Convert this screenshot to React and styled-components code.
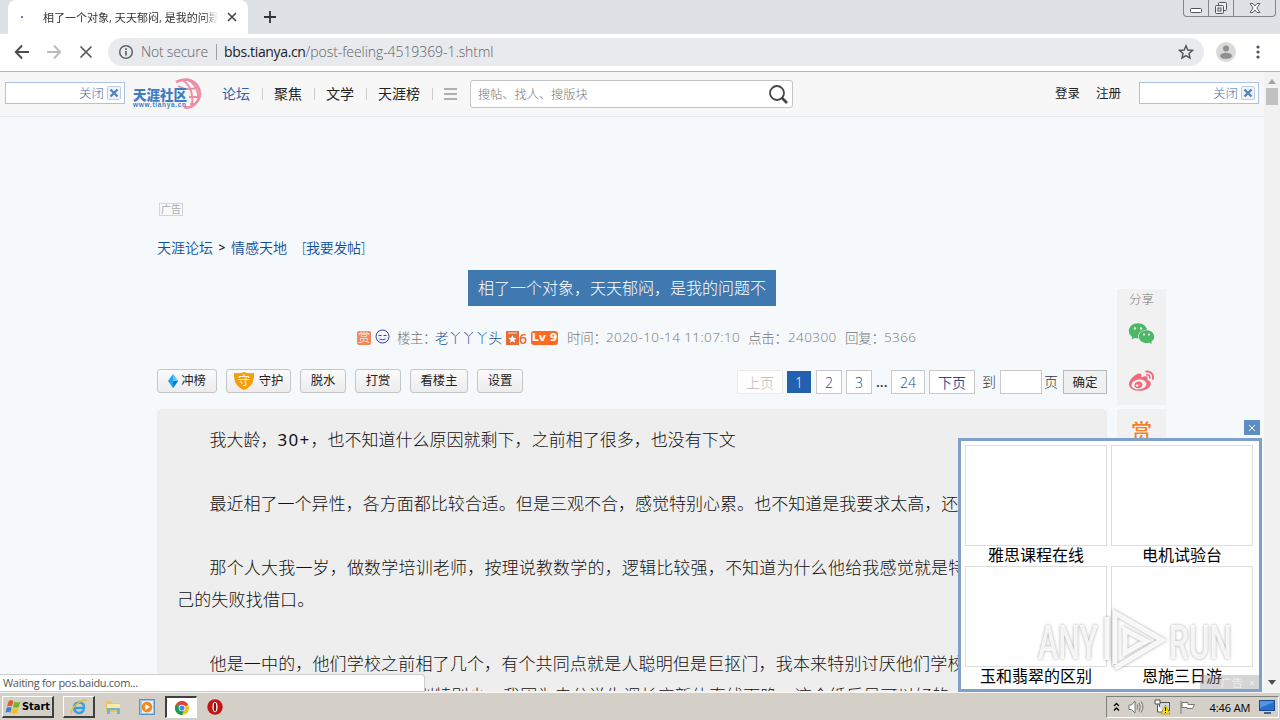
import React from "react";
import styled, { createGlobalStyle } from "styled-components";
import { FaWeibo } from "react-icons/fa";
import { AiFillWechat } from "react-icons/ai";

const GlobalStyle = createGlobalStyle`
  * { box-sizing: border-box; }
  body {
    margin: 0;
    overflow: hidden;
    font-family: "Open Sans", "Noto Sans CJK SC", sans-serif;
  }
`

const Screen = styled.div`
  position: relative;
  width: 1280px;
  height: 720px;
  display: flex;
  flex-direction: column;
  overflow: hidden;
  white-space: nowrap;
`

/* browser */
const TabStrip = styled.div`
  height: 34px;
  flex: none;
  display: flex;
  align-items: flex-start;
  background: #dee1e6;
  padding-left: 8px;
`
const Tab = styled.div`
  width: 240px;
  height: 34px;
  display: flex;
  align-items: center;
  background: #fff;
  border-radius: 8px 8px 0 0;
  padding: 0 10px 0 13px;
  i{
    width: 2px;
    height: 2px;
    background: #5b7fc7;
    margin-right: 20px;
  }
  span{
    width: 175px;
    overflow: hidden;
    font-size: 11px;
    letter-spacing: 0.02px;
    color: #333;
    -webkit-mask-image: linear-gradient(90deg, #000 92%, transparent);
    mask-image: linear-gradient(90deg, #000 92%, transparent);
  }
  svg{
    margin-left: 9px;
    flex: none;
  }
`
const NewTab = styled.div`
  height: 34px;
  display: flex;
  align-items: center;
  margin-left: 15px;
`
const WindowButtons = styled.div`
  margin-left: auto;
  margin-right: 4px;
  width: 93px;
  height: 17px;
  display: flex;
  border: 1px solid #82868f;
  border-top: none;
  border-radius: 0 0 4px 4px;
  span{
    width: 25px;
    display: flex;
    align-items: center;
    justify-content: center;
    border-right: 1px solid #82868f;
  }
  span:last-child{
    flex: 1;
    border: none;
  }
`
const Toolbar = styled.div`
  height: 38px;
  flex: none;
  display: flex;
  align-items: center;
  background: #fff;
  border-bottom: 1px solid #b4b5b7;
  padding: 0 13px 2px 14px;
`
const NavIcon = styled.svg`
  width: 16px;
  height: 16px;
  margin-right: 16px;
`
const Omnibox = styled.div`
  width: 1096px;
  height: 28px;
  display: flex;
  align-items: center;
  background: #e8eaed;
  border-radius: 14px;
  padding: 0 10px;
  margin-left: -2px;
  font-size: 14px;
  font-weight: 300;
  color: #5f6368;
  .secure{
    width: 75px;
    margin-left: 7px;
    letter-spacing: -0.2px;
  }
  .url{
    flex: 1;
    border-left: 1px solid #9aa0a6;
    line-height: 16px;
    padding-left: 7px;
    letter-spacing: -0.07px;
  }
  b{
    font-weight: 400;
    letter-spacing: -0.35px;
    color: #222;
  }
`

/* page */
const Viewport = styled.div`
  height: 619px;
  flex: none;
  display: flex;
  overflow: hidden;
`
const Page = styled.div`
  position: relative;
  width: 1264px;
  background: #f5f9fb;
  overflow: hidden;
`
const ScrollBar = styled.div`
  width: 16px;
  display: flex;
  flex-direction: column;
  align-items: center;
  background: #f1f1f1;
  padding: 7px 0 6px;
  i{
    width: 12px;
    height: 17px;
    background: #c1c1c1;
    margin: 4px 0 auto;
  }
`
const Header = styled.div`
  height: 45px;
  display: flex;
  align-items: center;
  background: #f7f7f7;
  border-bottom: 1px solid #e2eaed;
  padding: 0 5px;
`
const CloseAd = styled.div`
  width: 120px;
  height: 22px;
  display: flex;
  align-items: center;
  justify-content: flex-end;
  background: #fff;
  border: 1px solid #a9c3e6;
  padding-right: 3px;
  margin-bottom: 3px;
  font-size: 12.5px;
  font-weight: 300;
  color: #3d6eb0;
  svg{
    margin-left: 3px;
  }
`
const Logo = styled.svg`
  width: 70px;
  height: 32px;
  margin: 0 20px 0 7px;
`
const Menu = styled.div`
  display: flex;
  align-items: center;
  height: 20px;
  a{
    font-size: 14px;
    line-height: 20px;
    color: #222;
  }
  a:first-child{
    color: #2a62ad;
  }
  i{
    width: 1px;
    height: 12px;
    background: #ccc;
    margin: 0 11.5px;
  }
`
const Search = styled.div`
  width: 323px;
  height: 28px;
  display: flex;
  align-items: center;
  justify-content: space-between;
  background: #fff;
  border: 1px solid #c4c4c4;
  border-radius: 3px;
  padding: 0 3px 0 7px;
  margin-left: 13px;
  font-size: 12.2px;
  font-weight: 300;
  color: #777;
`
const Login = styled.div`
  width: 66px;
  display: flex;
  justify-content: space-between;
  margin: 0 18px 3px auto;
  font-size: 12.5px;
  color: #222;
`
const Content = styled.div`
  width: 950px;
  margin: 86px 0 0 157px;
  display: flex;
  flex-direction: column;
`
const AdTag = styled.div`
  width: 24px;
  height: 13px;
  border: 1px solid #d2d5d7;
  margin-left: 2px;
  font-size: 10px;
  line-height: 11px;
  text-align: center;
  color: #a9abad;
`
const Crumbs = styled.div`
  height: 20px;
  display: flex;
  align-items: center;
  margin-top: 21px;
  font-size: 14px;
  font-weight: 350;
  color: #0f4f9b;
  b{
    width: 18px;
    text-align: center;
    font-weight: 600;
    font-size: 12px;
    color: #111;
  }
  span{
    margin-left: 15px;
    letter-spacing: -0.35px;
  }
`
const Title = styled.div`
  width: 308px;
  height: 36px;
  margin: 13px 0 0 311px;
  padding-left: 10px;
  background: #4078b0;
  font-size: 16px;
  line-height: 36px;
  font-weight: 300;
  color: #fff;
`
const Meta = styled.div`
  height: 18px;
  display: flex;
  align-items: center;
  margin: 22px 0 0 200px;
  font-size: 13.5px;
  font-weight: 300;
  color: #777;
`
const MetaItem = styled.span`
  width: ${props => props.$w}px;
  flex: none;
  margin-top: -1px;
  letter-spacing: ${props => props.$ls || 0}px;
  color: ${props => props.$link ? "#0f4f9b" : "inherit"};
`
const Reward = styled.span`
  width: 14px;
  height: 14px;
  margin: 1px 4px 0 0;
  background: #f1875a;
  border-radius: 2px;
  color: #fff;
  font-size: 12px;
  line-height: 14px;
  text-align: center;
`
const StarBadge = styled.span`
  width: 21px;
  height: 16px;
  display: flex;
  align-items: center;
  margin: 2px 4px 0 0;
  color: #e96a35;
  font-size: 14px;
  font-weight: 600;
`
const Level = styled.span`
  width: 27px;
  height: 14px;
  margin: 1px 9px 0 0;
  border-radius: 3px;
  background: #ff6a1e;
  color: #fff;
  font-family: "DejaVu Sans", sans-serif;
  font-size: 11px;
  font-weight: bold;
  line-height: 14px;
  text-align: center;
`
const Actions = styled.div`
  height: 26px;
  display: flex;
  align-items: flex-start;
  margin-top: 23px;
`
const Button = styled.button`
  width: ${props => props.$w}px;
  height: 24px;
  display: flex;
  align-items: center;
  justify-content: center;
  gap: ${props => props.$gap || 0}px;
  margin-right: 9px;
  padding: 0;
  background: linear-gradient(#fafafa, #ececec);
  border: 1px solid #c3c5c6;
  border-radius: 3px;
  font-family: inherit;
  font-size: 12.3px;
  line-height: 22px;
  color: #222;
`
const Pager = styled.div`
  display: flex;
  align-items: center;
  margin: 1px 0 0 auto;
  font-size: 14px;
  font-weight: 300;
  color: #333;
`
const PageBox = styled.span`
  width: ${props => props.$w}px;
  height: ${props => props.$current ? 22 : 24}px;
  margin-left: ${props => props.$ml || 4}px;
  background: ${props => props.$current ? "#2360b0" : "#fff"};
  border: ${props => props.$current ? "none" : "1px solid " + (props.$off ? "#ececec" : "#c9c9c9")};
  color: ${props => props.$current ? "#fff" : props.$off ? "#bbb" : "#1d4d93"};
  font-weight: ${props => props.$off ? 300 : 350};
  line-height: 23px;
  text-align: center;
`
const Plain = styled.span`
  width: ${props => props.$w}px;
  margin: -2px 0 0 ${props => props.$ml}px;
  font-weight: ${props => props.$bold ? 600 : 300};
`
const Submit = styled.span`
  width: 44px;
  height: 24px;
  margin-left: 5px;
  background: #f0f0f0;
  border: 1px solid #b8b8b8;
  font-size: 12.5px;
  line-height: 23px;
  font-weight: 400;
  text-align: center;
  color: #222;
`
const Article = styled.div`
  width: 950px;
  height: 400px;
  margin-top: 14px;
  padding: 15px 0 0 20px;
  background: #eee;
  border-radius: 5px 5px 0 0;
  overflow: hidden;
  font-size: 17px;
  font-weight: 300;
  line-height: 32px;
  color: #111;
`
const Paragraph = styled.p`
  margin: 0 0 32px;
  text-indent: 32.5px;
  letter-spacing: ${props => props.$ls || 0.02}px;
`
const Num = styled.span`
  font-family: "Noto Sans", sans-serif;
  font-weight: 400;
  letter-spacing: 1.2px;
`
const Share = styled.div`
  position: absolute;
  left: 1117px;
  top: 217px;
  width: 49px;
  display: flex;
  flex-direction: column;
  gap: 4px;
`
const ShareBox = styled.div`
  height: 116px;
  display: flex;
  flex-direction: column;
  align-items: center;
  background: #f1f1f1;
  font-size: 12.5px;
  line-height: 22px;
  font-weight: 300;
  color: #777;
  svg{
    flex: none;
  }
  b{
    margin-top: 11px;
    font-size: 21px;
    font-weight: 500;
    color: #f58220;
  }
`

/* floating advert */
const Popup = styled.div`
  position: absolute;
  left: 958px;
  top: 438px;
  width: 304px;
  height: 254px;
  display: grid;
  grid-template-columns: 142px 142px;
  grid-template-rows: 121px 121px;
  column-gap: 4px;
  background: #fff;
  border: 3px solid #7fa0cb;
  padding: 4px 0 0 4px;
`
const PopupItem = styled.div`
  font-size: 16px;
  line-height: 18px;
  text-align: center;
  color: #000;
  div{
    height: 101px;
    border: 1px solid #ddd;
  }
`
const PopupClose = styled.div`
  position: absolute;
  left: 1244px;
  top: 420px;
  width: 16px;
  height: 15px;
  display: flex;
  align-items: center;
  justify-content: center;
  background: #5b8fc4;
`
const AdMark = styled.div`
  position: absolute;
  left: 1200px;
  top: 675px;
  width: 59px;
  height: 14px;
  display: flex;
  align-items: center;
  justify-content: flex-end;
  gap: 6px;
  padding-right: 4px;
  background: rgba(150, 150, 150, 0.4);
  color: #eee;
  font-size: 11px;
`
const Watermark = styled.svg`
  position: absolute;
  left: 1030px;
  top: 602px;
  width: 212px;
  height: 76px;
  filter: drop-shadow(0 0 1.5px rgba(0, 0, 0, 0.4));
`
const Status = styled.div`
  position: absolute;
  left: 0;
  top: 674px;
  width: 425px;
  height: 18px;
  padding-left: 3px;
  background: #fff;
  border: 1px solid #ccc;
  border-left: none;
  border-radius: 0 4px 0 0;
  font-size: 11px;
  line-height: 16px;
  letter-spacing: -0.3px;
  color: #555;
`

/* taskbar */
const TaskBar = styled.div`
  height: 29px;
  flex: none;
  display: flex;
  align-items: center;
  background: #d4d0c8;
  border-top: 2px solid #f5f4f1;
  padding: 1px 1px 0 2px;
`
const Task = styled.div`
  width: ${props => props.$w || 32}px;
  height: 22px;
  display: flex;
  align-items: center;
  justify-content: center;
  margin-right: ${props => props.$mr || 2}px;
  background: ${props => props.$active ? "#fff" : "transparent"};
  border-style: solid;
  border-width: ${props => props.$flat ? 0 : props.$active ? "2px 1px 1px 2px" : "1px 2px 2px 1px"};
  border-color: ${props => props.$active ? "#404040 #fff #fff #404040" : "#fff #404040 #404040 #fff"};
  font-family: "DejaVu Sans Condensed", "DejaVu Sans", sans-serif;
  font-size: 11px;
  font-weight: bold;
  color: #000;
`
const Tray = styled.div`
  width: 173px;
  height: 22px;
  display: flex;
  align-items: center;
  justify-content: space-between;
  margin-left: auto;
  padding: 0 3px 0 6px;
  border: 1px solid;
  border-color: #808080 #fff #fff #808080;
  font-size: 11px;
  color: #000;
  span{
    width: 41px;
    margin-left: 5px;
    letter-spacing: -0.1px;
  }
`

const pages = [
    {text: "上页", w: 46, off: true},
    {text: "1", w: 24, ml: 4, current: true},
    {text: "2", w: 26, ml: 5},
    {text: "3", w: 26},
]
const adverts = ["雅思课程在线", "电机试验台", "玉和翡翠的区别", "恩施三日游"]

function BoxX() {
    return(
        <svg width="14" height="14" viewBox="0 0 14 14">
            <rect x=".5" y=".5" width="13" height="13" rx="1" fill="#f1f5fa" stroke="#b8cce6"/>
            <path d="M3.500 3.500L10.500 10.500M10.500 3.500L3.500 10.500" stroke="#5580bd" strokeWidth="2.300"/>
        </svg>
    )
}

function Browser() {
    return(
        <>
            <TabStrip>
                <Tab>
                    <i/>
                    <span>相了一个对象, 天天郁闷, 是我的问题不</span>
                    <svg width="10" height="10" viewBox="0 0 10 10"><path d="M1 1L9 9M9 1L1 9" stroke="#444" strokeWidth="1.6"/></svg>
                </Tab>
                <NewTab>
                    <svg width="14" height="14" viewBox="0 0 14 14"><path d="M7 1V13M1 7H13" stroke="#333" strokeWidth="1.8"/></svg>
                </NewTab>
                <WindowButtons>
                    <span><svg width="13" height="17"><rect x=".5" y="8.500" width="11" height="4" rx="1" fill="#fff" stroke="#50545c"/></svg></span>
                    <span>
                        <svg width="14" height="17" fill="#eceef1" stroke="#50545c"><rect x="4.500" y="2.500" width="8" height="8" rx="1"/><rect x="1.500" y="5.500" width="8" height="8" rx="1"/><rect x="4" y="8" width="3" height="3"/></svg>
                    </span>
                    <span>
                        <svg width="12" height="17"><path d="M1 3.500h3l2 2.500 2-2.500h3L7.800 8 11 12.500H8L6 10l-2 2.500H1L4.200 8z" fill="#fff" stroke="#50545c" strokeWidth=".9"/></svg>
                    </span>
                </WindowButtons>
            </TabStrip>
            <Toolbar>
                <NavIcon viewBox="0 0 16 16" fill="none" stroke="#484b4f" strokeWidth="1.9"><path d="M15 8H2M8 1.500L1.800 8L8 14.500"/></NavIcon>
                <NavIcon viewBox="0 0 16 16" fill="none" stroke="#b8babd" strokeWidth="1.900"><path d="M1 8H14M8 1.500L14.200 8L8 14.500"/></NavIcon>
                <NavIcon viewBox="0 0 16 16" fill="none" stroke="#55585c" strokeWidth="1.700"><path d="M2.500 2.500L13.500 13.500M13.500 2.500L2.500 13.500"/></NavIcon>
                <Omnibox>
                    <svg width="16" height="16" viewBox="0 0 16 16"><circle cx="8" cy="8" r="6.300" fill="none" stroke="#5f6368" strokeWidth="1.500"/><path d="M8 7V11.500M8 4.300V5.900" stroke="#5f6368" strokeWidth="1.700"/></svg>
                    <span className="secure">Not secure</span>
                    <span className="url"><b>bbs.tianya.cn</b>/post-feeling-4519369-1.shtml</span>
                    <svg width="16" height="16" viewBox="0 0 16 16"><path d="M8 1.800L9.800 6l4.700.4-3.500 3 1 4.600L8 11.600 4 14l1-4.600-3.500-3L6.200 6z" fill="none" stroke="#505357" strokeWidth="1.400"/></svg>
                </Omnibox>
                <svg width="20" height="20" viewBox="0 0 20 20" style={{marginLeft: 12}}><circle cx="10" cy="10" r="10" fill="#dadada"/><circle cx="10" cy="6.500" r="3" fill="#8f8f8f"/><ellipse cx="10" cy="13.800" rx="6" ry="3" fill="#8f8f8f"/></svg>
                <svg width="4" height="14" viewBox="0 0 4 14" fill="#505357" style={{marginLeft: 20}}><circle cx="2" cy="2" r="1.600"/><circle cx="2" cy="7" r="1.600"/><circle cx="2" cy="12" r="1.600"/></svg>
            </Toolbar>
        </>
    )
}

function TianyaLogo() {
    return(
        <Logo viewBox="0 0 70 32">
            <g fill="none" stroke="#f08ba4" strokeWidth="1.800">
                <path d="M44 4Q57-2 65 7Q72 18 62 27Q57 31 52 29" strokeWidth="2.600"/>
                <path d="M50 2Q62 8 60 28M46 8Q57 14 66 9M57 19H68M55 1Q67 8 66 22M58 26H63"/>
            </g>
            <text x="1" y="22" fontSize="14" fontWeight="900" fill="#3e7cc5" textLength="54" lengthAdjust="spacingAndGlyphs" fontFamily="Noto Sans CJK SC">天涯社区</text>
            <text x="1" y="29" fontSize="6.500" fontWeight="bold" fill="#3e7cc5" textLength="53" fontFamily="Liberation Sans">www.tianya.cn</text>
        </Logo>
    )
}

function TopBar() {
    return(
        <Header>
            <CloseAd>关闭<BoxX/></CloseAd>
            <TianyaLogo/>
            <Menu>
                <a>论坛</a><i/><a>聚焦</a><i/><a>文学</a><i/><a>天涯榜</a><i/>
            </Menu>
            <svg width="13" height="12" viewBox="0 0 13 12"><path d="M0 1H13M0 6H13M0 11H13" stroke="#999" strokeWidth="1.600"/></svg>
            <Search>
                搜帖、找人、搜版块
                <svg width="22" height="22" viewBox="0 0 22 22" fill="none" stroke="#444" strokeWidth="1.800"><circle cx="10" cy="10" r="7"/><path d="M15 15L20 20" strokeWidth="2.600"/></svg>
            </Search>
            <Login><span>登录</span><span>注册</span></Login>
            <CloseAd>关闭<BoxX/></CloseAd>
        </Header>
    )
}

function Post() {
    return(
        <Content>
            <AdTag>广告</AdTag>
            <Crumbs>天涯论坛<b>&gt;</b>情感天地<span>[我要发帖]</span></Crumbs>
            <Title>相了一个对象，天天郁闷，是我的问题不</Title>
            <Meta>
                <Reward>赏</Reward>
                <svg width="15" height="15" viewBox="0 0 15 15" fill="none" stroke="#3c3ca8" style={{marginRight: 7, marginTop: -1}}><circle cx="7.500" cy="7.500" r="6.500"/><path d="M3.500 6.500H6.500M8.500 6.500H11.500M4.500 10Q7.500 11.500 10.500 10"/></svg>
                <MetaItem $w={38} $ls={-0.5}>楼主：</MetaItem>
                <MetaItem $w={71} $ls={-0.1} $link>老丫丫丫头</MetaItem>
                <StarBadge>
                    <svg width="13" height="14" viewBox="0 0 13 14"><path d="M0 0H13V14H0z" fill="#e96a35"/><path d="M2 2H11" stroke="#fff" strokeWidth=".8"/><path d="M6.500 4l1.200 2.700 2.800.2-2.100 1.900.7 2.900-2.600-1.500-2.600 1.500.7-2.900L2.500 6.900l2.800-.2z" fill="#fff"/></svg>
                    6
                </StarBadge>
                <Level>Lv 9</Level>
                <MetaItem $w={39} $ls={-0.3}>时间：</MetaItem>
                <MetaItem $w={142} $ls={0.4}>2020-10-14 11:07:10</MetaItem>
                <MetaItem $w={40} $ls={-0.3}>点击：</MetaItem>
                <MetaItem $w={57} $ls={0.4}>240300</MetaItem>
                <MetaItem $w={39} $ls={-0.3}>回复：</MetaItem>
                <MetaItem $w={40} $ls={0.4}>5366</MetaItem>
            </Meta>
            <Actions>
                <Button $w={60} $gap={3}>
                    <svg width="10" height="14" viewBox="0 0 10 14"><path d="M5 0L10 7L5 14L0 7z" fill="#27a5f2"/><path d="M5 0L10 7H5z" fill="#66cbff"/><path d="M5 14L10 7H5z" fill="#1379cf"/></svg>
                    冲榜
                </Button>
                <Button $w={65} $gap={5}>
                    <svg width="20" height="18" viewBox="0 0 20 18"><path d="M0 1Q6 2 10 0Q14 2 20 1V5Q19 15 10 18Q1 15 0 5z" fill="#f59d0d"/><text x="4" y="13" fontSize="12" fill="#fff">守</text></svg>
                    守护
                </Button>
                <Button $w={46}>脱水</Button>
                <Button $w={46}>打赏</Button>
                <Button $w={58}>看楼主</Button>
                <Button $w={46}>设置</Button>
                <Pager>
                    {
                        pages.map((p, id) => <PageBox key={id} $w={p.w} $ml={p.ml} $off={p.off} $current={p.current}>{p.text}</PageBox>)
                    }
                    <Plain $w={11} $ml={4} $bold>...</Plain>
                    <PageBox $w={34}>24</PageBox>
                    <PageBox $w={46}>下页</PageBox>
                    <Plain $w={15} $ml={7}>到</Plain>
                    <PageBox $w={42} $ml={3}/>
                    <Plain $w={14} $ml={2}>页</Plain>
                    <Submit>确定</Submit>
                </Pager>
            </Actions>
            <Article>
                <Paragraph>我大龄，<Num>30+</Num>，也不知道什么原因就剩下，之前相了很多，也没有下文</Paragraph>
                <Paragraph>最近相了一个异性，各方面都比较合适。但是三观不合，感觉特别心累。也不知道是我要求太高，还</Paragraph>
                <Paragraph $ls={0.18}>那个人大我一岁，做数学培训老师，按理说教数学的，逻辑比较强，不知道为什么他给我感觉就是特<br/>己的失败找借口。</Paragraph>
                <Paragraph $ls={0.16}>他是一中的，他们学校之前相了几个，有个共同点就是人聪明但是巨抠门，我本来特别讨厌他们学校<br/>的人因为之前相过的几个都这样别特别少，我因为去分说生调长应新体直线下晚，这个纸后是可以好的</Paragraph>
            </Article>
        </Content>
    )
}

function Taskbar() {
    return(
        <TaskBar>
            <Task $w={52} $mr={9}>
                <svg width="17" height="16" viewBox="0 0 15 15"><path d="M3 2q2-1.500 4.500 0L6 7Q4 5.800 1.500 7z" fill="#e8562a"/><path d="M8.300 2.500Q11 4 14 2.500L12.500 7.500Q10 9 7 7.500z" fill="#72b52c"/><path d="M1.200 8Q3.500 6.800 5.800 8L4.500 13Q2.500 11.500 0 13z" fill="#3c80d6"/><path d="M6.700 8.500q2.500 1.500 5.500 0L11 13q-3 1.500-5.500 0z" fill="#f6bd20"/></svg>
                Start
            </Task>
            <Task>
                <svg width="18" height="18" viewBox="0 0 18 18" fill="none"><path d="M14 11.500Q12 15.500 8.500 15Q4 14 4 9.500Q4.500 4.500 9.500 4.500Q14.500 5 14 10H5" stroke="#3aa0e0" strokeWidth="2.500"/><path d="M2 16Q-1 13 7 6Q15 0 16.500 3" stroke="#e9be3a" strokeWidth="1.500"/></svg>
            </Task>
            <Task $flat>
                <svg width="16" height="16" viewBox="0 0 16 16"><path d="M1 2H6L7 4H14V13H1z" fill="#e6c75e"/><path d="M2 5H15V9H2z" fill="#f8eba9"/><path d="M2 9H15V15H12V11H5V15H2z" fill="#6db5de"/></svg>
            </Task>
            <Task $flat>
                <svg width="16" height="16" viewBox="0 0 16 16"><rect x=".5" y=".5" width="15" height="15" fill="#9cc5ea" stroke="#5b91c5"/><rect x="3" y="2" width="11" height="12" fill="#e4eff9"/><circle cx="8" cy="8" r="5.300" fill="#f18a1b"/><path d="M6.300 5L11 8L6.300 11z" fill="#fff"/></svg>
            </Task>
            <Task $active>
                <svg width="14" height="14" viewBox="0 0 16 16"><circle cx="8" cy="8" r="8" fill="#f4c20d"/><path d="M8 8L1 4A8 8 0 0 1 15 4z" fill="#db4437"/><path d="M1 4A8 8 0 0 0 8 16L10.500 10z" fill="#0f9d58"/><circle cx="8" cy="8" r="3.800" fill="#fff"/><circle cx="8" cy="8" r="2.900" fill="#4285f4"/></svg>
            </Task>
            <Task $flat>
                <svg width="16" height="16" viewBox="0 0 16 16"><circle cx="8" cy="8" r="7.700" fill="#c11414"/><ellipse cx="8" cy="8" rx="2.600" ry="5.300" fill="#fff"/><ellipse cx="8" cy="8" rx="1.200" ry="4.500" fill="#8d0b0b"/></svg>
            </Task>
            <Tray>
                <svg width="7" height="10" viewBox="0 0 7 10" fill="none" stroke="#000" strokeWidth="1.300"><path d="M1 4L3.500 1.500L6 4M1 8.500L3.500 6L6 8.500"/></svg>
                <svg width="17" height="14" viewBox="0 0 17 14" fill="none" stroke="#777"><path d="M1 5H3.500L7 1V13L3.500 9.500H1z" fill="#fff"/><path d="M9 4.500Q10.500 7 9 9.500M11 3Q13.500 7 11 11.500M13 1.500Q17 7 13 12.500"/></svg>
                <svg width="17" height="16" viewBox="0 0 17 16"><rect x="5.500" y="3.500" width="10" height="8" fill="#cfd8dd" stroke="#555"/><path d="M1 1H6V5H1zM3.500 5V13H9" fill="#fff" stroke="#555"/><path d="M11.500 6L16 15H7z" fill="#ffdf25" stroke="#9b8200" strokeWidth=".6"/><path d="M11.500 8.500V12M11.500 13V14" stroke="#000"/></svg>
                <svg width="17" height="15" viewBox="0 0 17 15" fill="#fff" stroke="#777"><path d="M2 1V14"/><path d="M3 2.500H9V4.500H15.500L13.500 8.500H8V7.500H3z"/></svg>
                <span>4:46 AM</span>
                <svg width="16" height="14" viewBox="0 0 16 14"><rect x=".5" y=".5" width="15" height="10" fill="#2870cf" stroke="#174a91"/><path d="M1 8L15 2V1H1z" fill="#5295e5"/><path d="M5 13H12" stroke="#465f80" strokeWidth="2"/></svg>
            </Tray>
        </TaskBar>
    )
}

function App() {
    return(
        <Screen>
            <GlobalStyle/>
            <Browser/>
            <Viewport>
                <Page>
                    <TopBar/>
                    <Post/>
                    <Share>
                        <ShareBox>
                            分享
                            <AiFillWechat size={29} color="#4cb866" style={{marginTop: 8}}/>
                            <FaWeibo size={25} color="#f0697b" style={{marginTop: 21}}/>
                        </ShareBox>
                        <ShareBox><b>赏</b></ShareBox>
                    </Share>
                </Page>
                <ScrollBar>
                    <svg width="8" height="5"><path d="M0 5L4 0L8 5z" fill="#a3a3a3"/></svg>
                    <i/>
                    <svg width="8" height="5"><path d="M0 0H8L4 5z" fill="#505050"/></svg>
                </ScrollBar>
            </Viewport>
            <Popup>
                {
                    adverts.map((ad, id) => <PopupItem key={id}><div/>{ad}</PopupItem>)
                }
            </Popup>
            <PopupClose>
                <svg width="8" height="8"><path d="M1 1L7 7M7 1L1 7" stroke="#fff"/></svg>
            </PopupClose>
            <AdMark><span>广告</span><span>×</span></AdMark>
            <Watermark viewBox="0 0 212 76">
                <g fill="#fff" fillOpacity=".85" fontFamily="Roboto" fontSize="49" fontWeight="500">
                    <text x="8" y="57" textLength="60" lengthAdjust="spacingAndGlyphs">ANY</text>
                    <text x="139" y="57" textLength="63" lengthAdjust="spacingAndGlyphs">RUN</text>
                </g>
                <path d="M85 62V11L132 38L85 66M77 15V58M95 28V51L116 39z" fill="none" stroke="#fff" strokeOpacity=".9" strokeWidth="5"/>
            </Watermark>
            <Status>Waiting for pos.baidu.com...</Status>
            <Taskbar/>
        </Screen>
    )
}

export default App;
